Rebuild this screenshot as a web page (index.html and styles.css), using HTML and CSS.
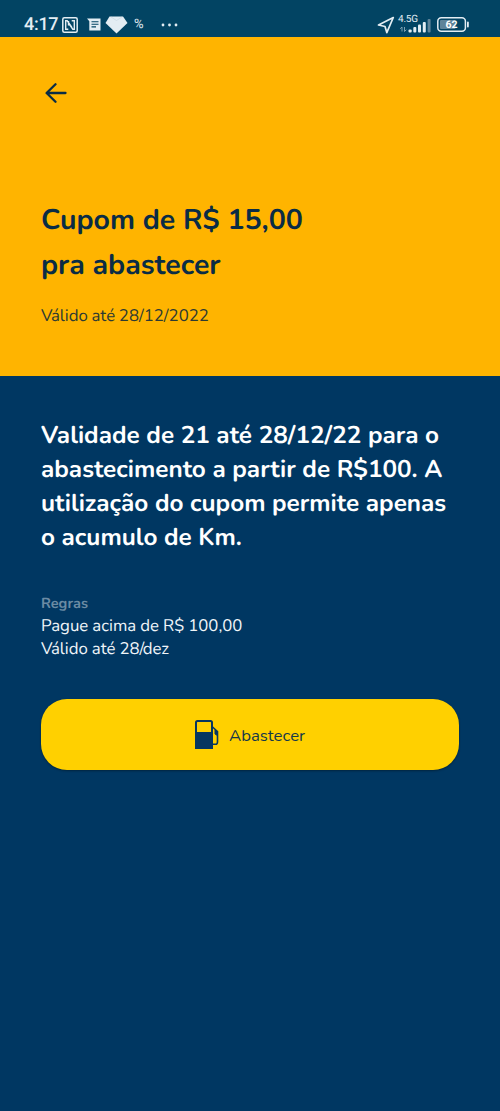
FILE: index.html
```
<!DOCTYPE html>
<html lang="pt-BR">
<head>
  <meta charset="UTF-8" />
  <meta name="viewport" content="width=device-width, initial-scale=1" />
  <title>Cupom</title>
  <link rel="stylesheet" href="styles.css">
</head>
<body>
  <div class="status-bar">
    <span class="clock">4:17</span>
    <svg class="icon-nfc" width="16" height="16" viewBox="0 0 16 16" fill="none" stroke="#e3edf3">
      <rect x="0.8" y="0.8" width="14.4" height="14.4" rx="1.5" stroke-width="1.5" />
      <path d="M6.3 12.2H3.7V3.8H5.2L9.8 10.2M6.5 8.5V4M9.7 3.8H12.3V12.2H10.8L6.5 6" stroke-width="1.4" />
    </svg>
    <svg class="icon-news" width="14" height="13" viewBox="0 0 14 13">
      <path d="M0 0.5H13.5V12.5H2.3V3.3Z" fill="#e3edf3" />
      <path d="M4.5 3.7H11.5M4.5 6.3H11.5M4.5 8.9H9" stroke="#024463" stroke-width="1.1" />
    </svg>
    <svg class="icon-gem" width="23" height="18" viewBox="0 0 23 18">
      <path d="M4.5 0.5H18L22.5 7L11.5 17.5L0.5 7Z" fill="#e3edf3" />
      <path d="M6 1L11.5 4.5L17 1" fill="none" stroke="#cbd9e1" stroke-width="0.7" />
    </svg>
    <span class="percent">%</span>
    <svg class="icon-more" width="17" height="4" viewBox="0 0 17 4" fill="#e3edf3">
      <circle cx="2" cy="2" r="1.4" />
      <circle cx="8.5" cy="2" r="1.4" />
      <circle cx="15" cy="2" r="1.4" />
    </svg>
    <svg class="icon-location" width="18" height="18" viewBox="0 0 18 18">
      <path d="M16.3 1.5L1.5 9L8 10.5L9.8 16.6Z" fill="none" stroke="#e3edf3" stroke-width="1.7" stroke-linejoin="round" />
    </svg>
    <div class="signal">
      <span class="network">4.5G</span>
      <svg width="33" height="16" viewBox="0 0 33 16" fill="#e3edf3">
        <path d="M4 14.5V10L2.2 11.8M6.5 10V14.5L8.3 12.7" fill="none" stroke="#8aa8b8" stroke-width="0.9" />
        <rect x="10.5" y="12.5" width="3.2" height="3" rx="1" />
        <rect x="15.3" y="10" width="3" height="5.5" rx="1" />
        <rect x="20" y="7.5" width="3" height="8" rx="1" />
        <rect x="24.8" y="5" width="3" height="10.5" rx="1" />
        <rect x="29.6" y="2" width="3" height="13.5" rx="1" fill="#5e8499" />
      </svg>
    </div>
    <svg class="icon-battery" width="33" height="15" viewBox="0 0 33 15">
      <rect x="0.8" y="0.8" width="27.6" height="13.4" rx="3.5" fill="none" stroke="#e3edf3" stroke-width="1.5" />
      <rect x="3" y="3" width="15.5" height="9" rx="1" fill="#5e8499" />
      <path d="M30.9 5.5V9.5" stroke="#e3edf3" stroke-width="1.8" stroke-linecap="round" />
      <text class="battery-level" x="14.6" y="11.2" text-anchor="middle" fill="#fff">62</text>
    </svg>
  </div>

  <header class="hero">
    <a class="back" href="#" aria-label="Voltar">
      <svg width="22" height="20" viewBox="0 0 22 20" fill="none" stroke="#0a2c45" stroke-width="2.3" stroke-linecap="round" stroke-linejoin="round">
        <path d="M20.5 10H2M10.5 1.3L1.6 10L10.5 18.7" />
      </svg>
    </a>
    <h1>Cupom de R$ 15,00<br>pra abastecer</h1>
    <p class="valid"><span class="kern">V</span>álido até 28/12/2022</p>
  </header>

  <main class="content">
    <p class="description">
      Validade de 21 até 28/12/22 para o<br>
      abastecimento a partir de R$100. A<br>
      utilização do cupom permite apenas<br>
      o acumulo de Km.
    </p>
    <h2>Regras</h2>
    <p class="rules">Pague acima de R$ 100,00<br><span class="kern">V</span>álido até 28<span class="kern">/</span>dez</p>
    <button class="fuel-button">
      <svg width="24" height="29" viewBox="0 0 24 29" fill="none" stroke="#063660">
        <path d="M1 28V2.5Q1 1 2.5 1H15.5Q17 1 17 2.5V28Z" stroke-width="2" />
        <path d="M1 12.5H17V28H1Z" fill="#063660" stroke-width="1" />
        <path d="M17 6.5L22.5 11.5V22Q22.5 24.3 20.5 24.3H17" stroke-width="1.6" />
        <path d="M20 9.5V14L22.5 15.5V11.5Z" fill="#063660" stroke-width="1" />
      </svg>
      <span class="fuel-label">Abastecer</span>
    </button>
  </main>
</body>
</html>
```

FILE: styles.css
```
* {
  box-sizing: border-box;
}
body {
  margin: 0;
  min-height: 1111px;
  background: #003762;
  font-family: Nunito, Lato, sans-serif;
  text-rendering: geometricPrecision;
}
h1, h2, p {
  margin: 0;
  white-space: nowrap;
}
.status-bar {
  display: flex;
  align-items: center;
  height: 37px;
  padding: 12px 30px 0 24px;
  background: #024463;
  color: #e3edf3;
  font-family: Roboto, sans-serif;
}
.clock {
  width: 34px;
  font-size: 18px;
  font-weight: 500;
  letter-spacing: -0.3px;
}
.icon-nfc {
  margin-left: 4px;
}
.icon-news {
  margin-left: 9px;
}
.icon-gem {
  margin-left: 4px;
}
.percent {
  width: 12px;
  margin-left: 6px;
  font-size: 13px;
}
.icon-more {
  margin-left: 15px;
}
.icon-location {
  margin-left: auto;
}
.signal {
  position: relative;
  width: 33px;
  height: 16px;
  margin-left: 3px;
}
.network {
  position: absolute;
  top: -2px;
  left: 0;
  font-size: 10px;
  line-height: 10px;
  letter-spacing: -0.2px;
}
.icon-battery {
  margin-left: 6px;
}
.battery-level {
  font-size: 10.5px;
  font-weight: 700;
}
.hero {
  height: 339px;
  padding: 46px 41px 0;
  background: #ffb400;
  color: #0a2c45;
}
.back {
  display: block;
  height: 20px;
  padding-left: 4px;
}
.back svg {
  display: block;
}
h1 {
  margin-top: 95px;
  font-size: 28.5px;
  font-weight: 700;
  line-height: 45px;
}
.kern {
  letter-spacing: -1.7px;
}
.valid {
  margin-top: 16px;
  font-size: 16.8px;
  line-height: 24px;
  word-spacing: -0.6px;
  color: #2d3a33;
}
.content {
  padding: 42px 41px 0;
}
.description {
  color: #fff;
  font-size: 24.3px;
  font-weight: 700;
  line-height: 34px;
}
h2 {
  margin-top: 40px;
  color: #6b8ba4;
  font-size: 14.5px;
  font-weight: 700;
  line-height: 20px;
}
.rules {
  color: #f0f5f9;
  font-size: 16.8px;
  line-height: 23px;
  word-spacing: -0.3px;
}
.fuel-button {
  display: flex;
  align-items: center;
  justify-content: center;
  gap: 10px;
  width: 418px;
  height: 71px;
  margin-top: 39px;
  padding: 0;
  border: none;
  border-radius: 26px;
  background: #ffd000;
  box-shadow: 0 1px 2px rgba(0, 20, 30, 0.5);
  color: #16384a;
  font-family: inherit;
  font-size: 16.8px;
}
.fuel-label {
  padding-top: 2px;
}
```
